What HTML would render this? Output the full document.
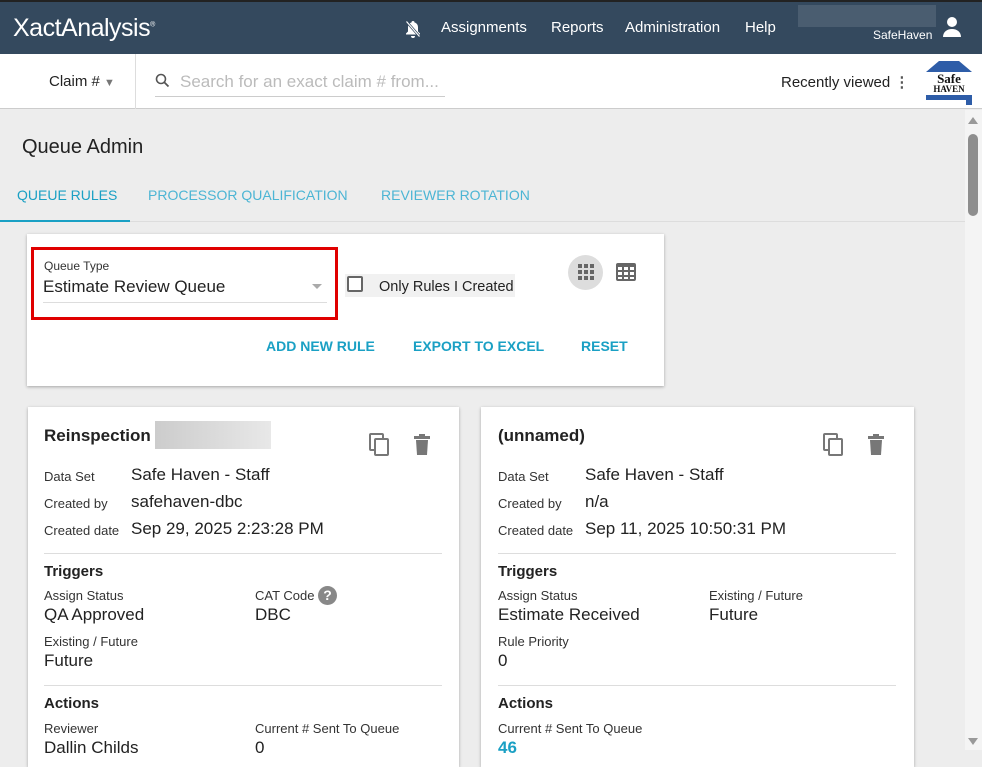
<!DOCTYPE html><html><head><style>
*{margin:0;padding:0;box-sizing:border-box}
body{width:982px;height:750px;overflow:hidden;background:#ededed;font-family:"Liberation Sans",Roboto,sans-serif;color:#222;position:relative}
.a{position:absolute;white-space:nowrap}
.hdr{left:0;top:0;width:982px;height:54px;background:#34495e;border-top:2px solid #222}
.nav{color:#fff;font-size:15px;top:19px}
.sub{left:0;top:54px;width:982px;height:55px;background:#fff;border-bottom:1px solid #ccc}
.card{background:#fff;box-shadow:0 1px 3px rgba(0,0,0,.3)}
.lbl{font-size:13px;color:#333}
.val{font-size:17px;color:#222}
.blue{color:#1aa0c4;font-size:14px;font-weight:bold}
.hr{height:1px;background:#ddd}
.h{font-size:15px;font-weight:bold;color:#222}
.tab{font-size:14px;top:187px}
</style></head><body>
<div class="a hdr"></div>
<div class="a" style="left:13px;top:14px;color:#fff;font-size:25px;letter-spacing:-.5px">XactAnalysis<sup style="font-size:7px">®</sup></div>
<svg class="a" style="left:405px;top:20px" width="16" height="18" viewBox="0 0 16 18"><path d="M8 1a1.5 1.5 0 0 1 1.5 1.5c2.5.6 3.5 2.6 3.5 5v4l2 2v1H1v-1l2-2v-4c0-2.4 1-4.4 3.5-5A1.5 1.5 0 0 1 8 1zM6 16h4a2 2 0 0 1-4 0z" fill="#fff"/><path d="M1 1l14 16" stroke="#34495e" stroke-width="2.5"/><path d="M1.5 1.5l13 15" stroke="#fff" stroke-width="1.2"/></svg>
<div class="a nav" style="left:441px">Assignments</div>
<div class="a nav" style="left:551px">Reports</div>
<div class="a nav" style="left:625px">Administration</div>
<div class="a nav" style="left:745px">Help</div>
<div class="a" style="left:798px;top:5px;width:138px;height:22px;background:#4a5d70"></div>
<div class="a" style="left:873px;top:28px;color:#fff;font-size:12px">SafeHaven</div>
<svg class="a" style="left:942px;top:16px" width="20" height="22" viewBox="0 0 20 22"><circle cx="10" cy="6" r="5" fill="#fff"/><path d="M1 21c0-5 4-8 9-8s9 3 9 8z" fill="#fff"/></svg>
<div class="a sub"></div>
<div class="a" style="left:135px;top:54px;width:1px;height:55px;background:#ddd"></div>
<div class="a" style="left:49px;top:73px;font-size:15px">Claim # <span style="color:#777;font-size:11px">▼</span></div>
<svg class="a" style="left:155px;top:73px" width="16" height="16"><circle cx="6" cy="6" r="4.5" stroke="#555" stroke-width="1.6" fill="none"/><path d="M9.5 9.5l4 4" stroke="#555" stroke-width="1.8"/></svg>
<div class="a" style="left:180px;top:72px;font-size:17px;color:#bbb">Search for an exact claim # from...</div>
<div class="a" style="left:155px;top:96px;width:290px;height:1px;background:#ccc"></div>
<div class="a" style="left:781px;top:73px;font-size:15px">Recently viewed <b style="color:#555">⋮</b></div>
<svg class="a" style="left:923px;top:58px" width="52" height="48" viewBox="0 0 52 48"><path d="M3 14L16 3h20l13 11z" fill="#2e5da8"/><text x="26" y="25" text-anchor="middle" font-family="Liberation Serif" font-weight="bold" font-size="13" fill="#111">Safe</text><text x="26" y="34" text-anchor="middle" font-family="Liberation Serif" font-weight="bold" font-size="9" fill="#111">HAVEN</text><path d="M3 37h46v10h-6v-5H3z" fill="#2e5da8"/></svg>
<div class="a" style="left:965px;top:110px;width:17px;height:640px;background:#f4f4f4"></div>
<div class="a" style="left:968px;top:117px;width:0;height:0;border:5px solid transparent;border-bottom:7px solid #999;border-top:0"></div>
<div class="a" style="left:968px;top:134px;width:10px;height:82px;background:#8e8e8e;border-radius:5px"></div>
<div class="a" style="left:968px;top:738px;border:5px solid transparent;border-top:7px solid #999;border-bottom:0"></div>
<div class="a" style="left:22px;top:136px;font-size:20px;color:#222">Queue Admin</div>
<div class="a tab" style="left:17px;color:#1aa0c4">QUEUE RULES</div>
<div class="a tab" style="left:148px;color:#4cb5d4">PROCESSOR QUALIFICATION</div>
<div class="a tab" style="left:381px;color:#4cb5d4">REVIEWER ROTATION</div>
<div class="a" style="left:0;top:221px;width:965px;height:1px;background:#ddd"></div>
<div class="a" style="left:0;top:220px;width:130px;height:2px;background:#1aa0c4"></div>
<div class="a card" style="left:27px;top:234px;width:637px;height:152px"></div>
<div class="a" style="left:31px;top:247px;width:307px;height:73px;border:3px solid #e00000"></div>
<div class="a lbl" style="left:44px;top:259px;font-size:12px">Queue Type</div>
<div class="a val" style="left:43px;top:277px">Estimate Review Queue</div>
<div class="a" style="left:312px;top:284px;border:5px solid transparent;border-top:5px solid #aaa;border-bottom:0"></div>
<div class="a" style="left:43px;top:302px;width:284px;height:1px;background:#ddd"></div>
<div class="a" style="left:345px;top:274px;width:170px;height:23px;background:#f1f1f1"></div>
<div class="a" style="left:347px;top:276px;width:16px;height:16px;border:2px solid #666;border-radius:2px;background:#fff"></div>
<div class="a" style="left:379px;top:279px;font-size:14.5px">Only Rules I Created</div>
<div class="a" style="left:568px;top:255px;width:35px;height:35px;border-radius:50%;background:#ddd"></div>
<svg class="a" style="left:577px;top:263px" width="18" height="18"><g fill="#666"><rect x="1" y="1" width="4" height="4"/><rect x="7" y="1" width="4" height="4"/><rect x="13" y="1" width="4" height="4"/><rect x="1" y="7" width="4" height="4"/><rect x="7" y="7" width="4" height="4"/><rect x="13" y="7" width="4" height="4"/><rect x="1" y="13" width="4" height="4"/><rect x="7" y="13" width="4" height="4"/><rect x="13" y="13" width="4" height="4"/></g></svg>
<svg class="a" style="left:615px;top:262px" width="22" height="20"><rect x="1" y="1" width="20" height="18" rx="2" fill="#666"/><g fill="#fff"><rect x="3" y="5" width="4" height="3"/><rect x="9" y="5" width="4" height="3"/><rect x="15" y="5" width="4" height="3"/><rect x="3" y="10" width="4" height="3"/><rect x="9" y="10" width="4" height="3"/><rect x="15" y="10" width="4" height="3"/><rect x="3" y="15" width="4" height="2"/><rect x="9" y="15" width="4" height="2"/><rect x="15" y="15" width="4" height="2"/></g></svg>
<div class="a blue" style="left:266px;top:338px">ADD NEW RULE</div>
<div class="a blue" style="left:413px;top:338px">EXPORT TO EXCEL</div>
<div class="a blue" style="left:581px;top:338px">RESET</div>

<div class="a card" style="left:28px;top:407px;width:431px;height:360px"></div>
<div class="a" style="left:44px;top:426px;font-size:17px;font-weight:bold;color:#222">Reinspection</div>
<div class="a" style="left:155px;top:421px;width:116px;height:28px;background:linear-gradient(90deg,#ccc,#e8e8e8)"></div>
<svg class="a" style="left:369px;top:433px" width="22" height="24"><rect x="1" y="1" width="13" height="16" rx="1" fill="none" stroke="#777" stroke-width="2"/><rect x="6" y="6" width="13" height="16" rx="1" fill="#fff" stroke="#777" stroke-width="2"/></svg>
<svg class="a" style="left:413px;top:434px" width="18" height="22"><rect x="1" y="2" width="16" height="3" fill="#777"/><rect x="6" y="0" width="6" height="3" fill="#777"/><path d="M3 6h12l-1 15H4z" fill="#777"/></svg>
<div class="a lbl" style="left:44px;top:469px">Data Set</div><div class="a val" style="left:131px;top:465px">Safe Haven - Staff</div>
<div class="a lbl" style="left:44px;top:496px">Created by</div><div class="a val" style="left:131px;top:492px">safehaven-dbc</div>
<div class="a lbl" style="left:44px;top:523px">Created date</div><div class="a val" style="left:131px;top:519px">Sep 29, 2025 2:23:28 PM</div>
<div class="a hr" style="left:44px;top:553px;width:398px"></div>
<div class="a h" style="left:44px;top:563px">Triggers</div>
<div class="a lbl" style="left:44px;top:588px">Assign Status</div><div class="a val" style="left:44px;top:605px">QA Approved</div>
<div class="a lbl" style="left:255px;top:588px">CAT Code</div>
<div class="a" style="left:318px;top:586px;width:19px;height:19px;border-radius:50%;background:#888;color:#fff;font-size:14px;font-weight:bold;text-align:center;line-height:19px">?</div>
<div class="a val" style="left:255px;top:605px">DBC</div>
<div class="a lbl" style="left:44px;top:634px">Existing / Future</div><div class="a val" style="left:44px;top:651px">Future</div>
<div class="a hr" style="left:44px;top:685px;width:398px"></div>
<div class="a h" style="left:44px;top:695px">Actions</div>
<div class="a lbl" style="left:44px;top:721px">Reviewer</div><div class="a val" style="left:44px;top:738px">Dallin Childs</div>
<div class="a lbl" style="left:255px;top:721px">Current # Sent To Queue</div><div class="a val" style="left:255px;top:738px">0</div>

<div class="a card" style="left:481px;top:407px;width:433px;height:360px"></div>
<div class="a" style="left:498px;top:426px;font-size:17px;font-weight:bold;color:#222">(unnamed)</div>
<svg class="a" style="left:823px;top:433px" width="22" height="24"><rect x="1" y="1" width="13" height="16" rx="1" fill="none" stroke="#777" stroke-width="2"/><rect x="6" y="6" width="13" height="16" rx="1" fill="#fff" stroke="#777" stroke-width="2"/></svg>
<svg class="a" style="left:867px;top:434px" width="18" height="22"><rect x="1" y="2" width="16" height="3" fill="#777"/><rect x="6" y="0" width="6" height="3" fill="#777"/><path d="M3 6h12l-1 15H4z" fill="#777"/></svg>
<div class="a lbl" style="left:498px;top:469px">Data Set</div><div class="a val" style="left:585px;top:465px">Safe Haven - Staff</div>
<div class="a lbl" style="left:498px;top:496px">Created by</div><div class="a val" style="left:585px;top:492px">n/a</div>
<div class="a lbl" style="left:498px;top:523px">Created date</div><div class="a val" style="left:585px;top:519px">Sep 11, 2025 10:50:31 PM</div>
<div class="a hr" style="left:498px;top:553px;width:398px"></div>
<div class="a h" style="left:498px;top:563px">Triggers</div>
<div class="a lbl" style="left:498px;top:588px">Assign Status</div><div class="a val" style="left:498px;top:605px">Estimate Received</div>
<div class="a lbl" style="left:709px;top:588px">Existing / Future</div><div class="a val" style="left:709px;top:605px">Future</div>
<div class="a lbl" style="left:498px;top:634px">Rule Priority</div><div class="a val" style="left:498px;top:651px">0</div>
<div class="a hr" style="left:498px;top:685px;width:398px"></div>
<div class="a h" style="left:498px;top:695px">Actions</div>
<div class="a lbl" style="left:498px;top:721px">Current # Sent To Queue</div><div class="a val" style="left:498px;top:738px;color:#1aa0c4;font-weight:bold">46</div>
</body></html>
